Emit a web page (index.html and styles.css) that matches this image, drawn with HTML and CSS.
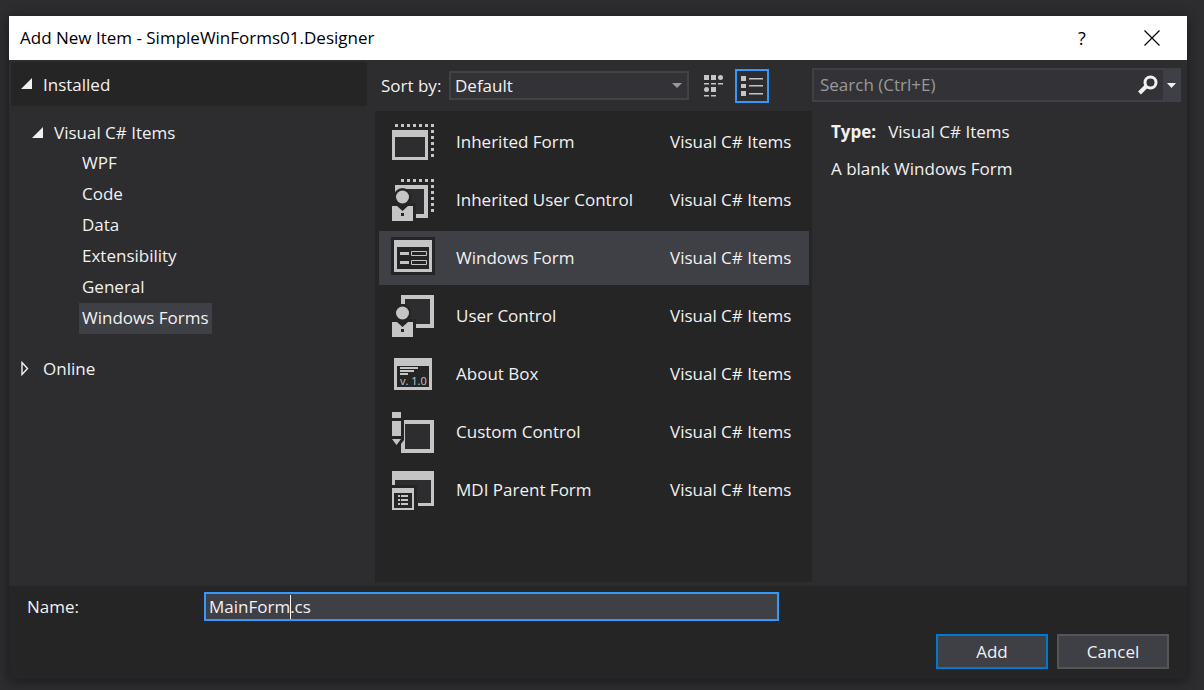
FILE: index.html
```html
<!DOCTYPE html>
<html lang="en">
<head>
<meta charset="utf-8">
<title>Add New Item</title>
<link rel="stylesheet" href="styles.css">
</head>
<body>
<main class="dialog">
  <header class="titlebar">
    <h1 class="title">Add New Item - SimpleWinForms01.Designer</h1>
    <button class="caption-button help" type="button" aria-label="Help">?</button>
    <button class="caption-button" type="button" aria-label="Close">
      <svg width="16" height="16" viewBox="0 0 16 16"><path d="M.5.5l15 15M15.5.5l-15 15" stroke="#000" stroke-width="1.2"/></svg>
    </button>
  </header>

  <div class="content">
    <nav class="tree" aria-label="Categories">
      <div class="tree-head">
        <svg class="arrow" width="12" height="12" viewBox="0 0 12 12"><path d="M11 0v11H0z" fill="#f1f1f1"/></svg>
        <span>Installed</span>
      </div>
      <div class="tree-group">
        <svg class="arrow" width="12" height="12" viewBox="0 0 12 12"><path d="M11 0v11H0z" fill="#f1f1f1"/></svg>
        <span>Visual C# Items</span>
      </div>
      <ul class="tree-items">
        <li><a href="#wpf">WPF</a></li>
        <li><a href="#code">Code</a></li>
        <li><a href="#data">Data</a></li>
        <li><a href="#extensibility">Extensibility</a></li>
        <li><a href="#general">General</a></li>
        <li><a class="current" href="#windows-forms" aria-current="true">Windows Forms</a></li>
      </ul>
      <div class="tree-online">
        <svg class="arrow" width="12" height="16" viewBox="0 0 12 16"><path d="M1 1.500v12L6.500 7.500z" fill="none" stroke="#f1f1f1" stroke-width="1.400"/></svg>
        <span>Online</span>
      </div>
    </nav>

    <section class="templates">
      <div class="toolbar">
        <label for="sort">Sort by:</label>
        <div class="select-wrap">
          <select id="sort"><option>Default</option></select>
          <svg class="select-arrow" width="10" height="5" viewBox="0 0 10 5"><path d="M0 0h10L5 5z" fill="#999"/></svg>
        </div>
        <button class="view-button" type="button" aria-label="Medium icons">
          <svg width="22" height="24" viewBox="0 0 22 24" fill="#c5c5c5"><path d="M1 1h5v5H1zM8 1h5v5H8zM1 9h5v1.500H1zM8 9h5v1.500H8zM15 9h5v1.500h-5zM8 13h5v5H8zM1 21h5v1.500H1zM8 21h5v1.500H8z"/><circle cx="17.500" cy="3.500" r="2.500"/><circle cx="3.500" cy="15.500" r="2.500"/></svg>
        </button>
        <button class="view-button active" type="button" aria-label="Small icons" aria-pressed="true">
          <svg width="22" height="22" viewBox="0 0 22 22" fill="#c5c5c5"><path d="M0 1h5v5H0zM0 9h5v4H0zM0 16h5v5H0zM8 3h14v1.500H8zM8 10h14v1.500H8zM8 18h14v1.500H8z"/></svg>
        </button>
      </div>
      <ul class="list" role="listbox" aria-label="Templates">
        <li class="item" role="option">
          <svg class="icon" width="60" height="54" viewBox="0 0 60 54" fill="#c5c5c5"><path d="M16 22h30v20H16z" fill="#2d2d30"/><path fill-rule="evenodd" d="M13 15h36v30H13zM16 22v20h30V22z"/><path d="M16 10.500h39" stroke="#c5c5c5" stroke-width="3" stroke-dasharray="3 3"/><path d="M53.500 15v27" stroke="#c5c5c5" stroke-width="3" stroke-dasharray="3 3"/></svg>
          <span>Inherited Form</span><span>Visual C# Items</span>
        </li>
        <li class="item" role="option">
          <svg class="icon" width="60" height="54" viewBox="0 0 60 54" fill="#c5c5c5"><path d="M20 16h25v25H20z" fill="#2d2d30"/><path d="M16 12h33v33H37v-4h8V16H20v5h-4z"/><path d="M22 7.500h33" stroke="#c5c5c5" stroke-width="3" stroke-dasharray="3 3"/><path d="M53.500 12v27" stroke="#c5c5c5" stroke-width="3" stroke-dasharray="3 3"/><circle cx="23.500" cy="24" r="9" fill="#252526"/><path d="M20 30h17v18H20z" fill="#252526"/><circle cx="23.500" cy="24" r="6.500"/><path d="M13 33h5l5.500 5 5.500-5h5v15H13z"/><path d="M22 40h3v3h-3z" fill="#252526"/></svg>
          <span>Inherited User Control</span><span>Visual C# Items</span>
        </li>
        <li class="item selected" role="option" aria-selected="true">
          <svg class="icon" width="60" height="54" viewBox="0 0 60 54" fill="#c5c5c5"><path d="M12 6h44v38H12z" fill="#252526"/><path fill-rule="evenodd" d="M15 9h38v32H15zM18 16v22h32V16z"/><path d="M21 21h9v3h-9zM21 30h9v3h-9z"/><path d="M32.500 20.500h15v4h-15zM32.500 29.500h15v4h-15z" fill="none" stroke="#c5c5c5"/></svg>
          <span>Windows Form</span><span>Visual C# Items</span>
        </li>
        <li class="item" role="option">
          <svg class="icon" width="60" height="54" viewBox="0 0 60 54" fill="#c5c5c5"><path d="M26 10h25v25H26z" fill="#2d2d30"/><path d="M22 6h33v33H37v-4h14V10H26v5h-4z"/><circle cx="23.500" cy="24" r="9" fill="#252526"/><path d="M23 30h14v9H23z" fill="#252526"/><circle cx="23.500" cy="24" r="6.500"/><path d="M13 33h5l5.500 5 5.500-5h5v15H13z"/><path d="M22 40h3v3h-3z" fill="#252526"/></svg>
          <span>User Control</span><span>Visual C# Items</span>
        </li>
        <li class="item" role="option">
          <svg class="icon" width="60" height="54" viewBox="0 0 60 54" fill="#c5c5c5"><path fill-rule="evenodd" d="M15 11h38v32H15zM18 19v21h32V19z"/><path d="M21 20h18v2H21zM21 23h14v2H21zM21 26h8v2h-8z"/><text class="icon-text" x="21" y="38">v. 1.0</text></svg>
          <span>About Box</span><span>Visual C# Items</span>
        </li>
        <li class="item" role="option">
          <svg class="icon" width="60" height="54" viewBox="0 0 60 54" fill="#c5c5c5"><path d="M26 19h25v25H26z" fill="#2d2d30"/><path d="M13 7h9v6h-9zM13 16h9v15h-9zM13 34h9l-4.500 6z"/><path fill-rule="evenodd" d="M25 15h30v33H22v-9l3-4zM26 19v25h25V19z"/></svg>
          <span>Custom Control</span><span>Visual C# Items</span>
        </li>
        <li class="item" role="option">
          <svg class="icon" width="60" height="54" viewBox="0 0 60 54" fill="#c5c5c5"><path d="M16 17h36v23H38V22H16z" fill="#2d2d30"/><path d="M13 8h42v35H39v-3h13V17H16v5h-3z"/><path fill-rule="evenodd" d="M13 25h22v22H13zM15 30v15h18V30z"/><path d="M19 32h2v2h-2zM19 36h2v2h-2zM19 40h2v2h-2zM22 32h7v2h-7zM22 36h7v2h-7zM22 40h7v2h-7z"/></svg>
          <span>MDI Parent Form</span><span>Visual C# Items</span>
        </li>
      </ul>
    </section>

    <aside class="details">
      <form class="search" role="search">
        <input class="search-input" type="search" placeholder="Search (Ctrl+E)" aria-label="Search">
        <button class="search-go" type="button" aria-label="Run search">
          <svg width="20" height="20" viewBox="0 0 20 20" fill="none" stroke="#f1f1f1"><circle cx="12.500" cy="7.500" r="5.500" stroke-width="3"/><path d="M8 11.500L1.500 18" stroke-width="4"/></svg>
        </button>
        <button class="search-menu" type="button" aria-label="Search options">
          <svg width="9" height="5" viewBox="0 0 9 5"><path d="M0 0h9L4.500 5z" fill="#f1f1f1"/></svg>
        </button>
      </form>
      <p class="type"><strong>Type:</strong><span>Visual C# Items</span></p>
      <p class="description">A blank Windows Form</p>
    </aside>
  </div>

  <footer class="footer">
    <div class="name-row">
      <label for="name">Name:</label>
      <div class="name-wrap">
        <input id="name" class="name-input" type="text" value="MainForm.cs">
        <span class="caret"></span>
      </div>
    </div>
    <div class="actions">
      <button class="button primary" type="button">Add</button>
      <button class="button" type="button">Cancel</button>
    </div>
  </footer>
</main>
</body>
</html>
```
FILE: styles.css
```css
* {
  box-sizing: border-box;
}

body {
  margin: 0;
  min-height: 100vh;
  display: flex;
  padding: 16px 17px 11px 9px;
  background: #2d2d30;
  color: #f1f1f1;
  font: 17px/24px "Open Sans", "Noto Sans", sans-serif;
}

button,
input,
select {
  font: inherit;
  color: inherit;
  margin: 0;
  border-radius: 0;
}

svg {
  display: block;
  flex: none;
}

ul {
  list-style: none;
  margin: 0;
  padding: 0;
}

.dialog {
  flex: 1;
  display: flex;
  flex-direction: column;
  background: #2d2d30;
  box-shadow: 0 2px 12px rgba(0, 0, 0, 0.45);
}

.titlebar {
  display: flex;
  align-items: center;
  height: 44px;
  padding-left: 11px;
  background: #fff;
  color: #000;
}

.title {
  flex: 1;
  margin: 0;
  font-size: 17px;
  font-weight: 400;
}

.caption-button {
  display: flex;
  align-items: center;
  justify-content: center;
  width: 70px;
  height: 44px;
  padding: 0;
  border: 0;
  background: none;
}

.help {
  font-size: 18px;
}

.content {
  flex: 1;
  display: grid;
  grid-template-columns: 366fr 437fr 375fr;
}

.tree {
  padding: 2px 8px 0 2px;
}

.tree-head,
.tree-group,
.tree-online {
  display: flex;
  align-items: center;
  gap: 10px;
  padding-left: 10px;
  height: 31px;
}

.tree-head {
  height: 44px;
  margin-bottom: 11px;
  padding-bottom: 0;
  background: #252526;
}

.tree-head span {
  padding-top: 2px;
}

.tree-group {
  padding-left: 21px;
}

.tree-items {
  padding-left: 68px;
}

.tree-items li {
  display: flex;
}

.tree-items a {
  padding: 3px 3px 4px;
  color: inherit;
  text-decoration: none;
}

.tree-items .current {
  background: #3f3f46;
}

.tree-online {
  margin-top: 19px;
}

.templates {
  display: flex;
  flex-direction: column;
  padding-bottom: 4px;
}

.toolbar {
  display: flex;
  align-items: center;
  height: 51px;
  padding: 0 43px 0 6px;
}

.toolbar label {
  width: 68px;
}

.select-wrap {
  position: relative;
  flex: 1;
  display: flex;
  margin-right: 8px;
}

.select-wrap select {
  width: 100%;
  height: 29px;
  padding: 0 4px;
  border: 2px solid #434346;
  background: #333337;
  appearance: none;
}

.select-arrow {
  position: absolute;
  right: 7px;
  top: 12px;
}

.view-button {
  display: flex;
  align-items: center;
  justify-content: center;
  width: 34px;
  height: 34px;
  margin-left: 4px;
  padding: 0;
  border: 0;
  background: none;
}

.view-button:first-of-type {
  margin-left: 0;
}

.view-button.active {
  border: 2px solid #3399ff;
}

.list {
  flex: 1;
  display: flex;
  flex-direction: column;
  gap: 4px;
  padding: 4px 3px 4px 4px;
  background: #252526;
}

.item {
  display: grid;
  grid-template-columns: 77px 214fr 139fr;
  align-items: center;
  height: 54px;
}

.item.selected {
  background: #3f3f46;
}

.icon-text {
  font: 11px "Open Sans", sans-serif;
}

.details {
  padding: 8px 6px 0 0;
}

.search {
  display: flex;
  height: 34px;
  border: 2px solid #3f3f46;
  background: #333337;
}

.search-input {
  flex: 1;
  min-width: 0;
  padding: 0 6px;
  border: 0;
  background: none;
}

.search-input::placeholder {
  color: #999;
  opacity: 1;
}

.search-go,
.search-menu {
  display: flex;
  align-items: center;
  justify-content: center;
  padding: 0;
  border: 0;
  background: none;
}

.search-go {
  width: 30px;
}

.search-menu {
  width: 16px;
  background: #3f3f46;
}

.type,
.description {
  margin: 0;
  padding-left: 19px;
}

.type {
  display: flex;
  gap: 12px;
  margin-top: 18px;
}

.description {
  margin-top: 13px;
}

.footer {
  padding: 6px 18px 10px;
  background: #252526;
}

.name-row {
  display: flex;
  align-items: center;
}

.name-row label {
  width: 177px;
}

.name-wrap {
  position: relative;
  flex: 0 1 575px;
  display: flex;
}

.name-input {
  width: 100%;
  height: 29px;
  padding: 0 3px;
  border: 2px solid #3399ff;
  outline: 0;
  background: #3f3f46;
}

.caret {
  position: absolute;
  left: 86px;
  top: 3px;
  width: 1px;
  height: 24px;
  background: #fff;
}

.actions {
  display: flex;
  justify-content: flex-end;
  gap: 9px;
  margin-top: 13px;
}

.button {
  width: 112px;
  height: 35px;
  padding: 0;
  border: 2px solid #555;
  background: #3f3f46;
}

.button.primary {
  border-color: #007acc;
}
```
